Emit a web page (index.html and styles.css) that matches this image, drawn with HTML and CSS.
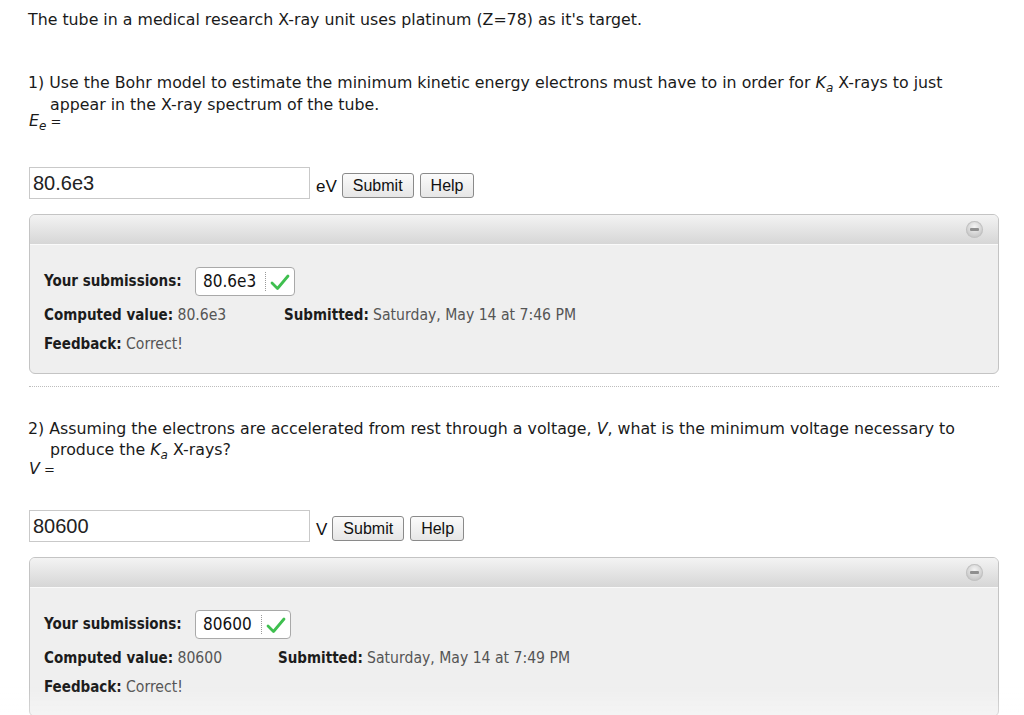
FILE: index.html
```html
<!DOCTYPE html>
<html>
<head>
<meta charset="utf-8">
<link rel="stylesheet" href="styles.css">
</head>
<body>
<div class="page">
  <p class="intro">The tube in a medical research X-ray unit uses platinum (Z=78) as it's target.</p>

  <div class="question q1">
    <p class="qtext">1) Use the Bohr model to estimate the minimum kinetic energy electrons must have to in order for <i>K<sub>a</sub></i> X-rays to just appear in the X-ray spectrum of the tube.</p>
    <div class="var"><i>E<sub>e</sub></i> =</div>
    <div class="answer-row">
      <div class="input">80.6e3</div>
      <span class="unit">eV</span>
      <button class="btn">Submit</button>
      <button class="btn help">Help</button>
    </div>
    <div class="panel">
      <div class="panel-head"><span class="collapse"></span></div>
      <div class="panel-body">
        <div class="row subs">
          <span class="lbl">Your submissions:</span>
          <span class="subbox"><span class="subval">80.6e3</span><span class="sep"></span><svg class="check" viewBox="0 0 20 18" width="20" height="18"><path d="M2 10 L7.5 15.5 L18 3" fill="none" stroke="#3fbf4f" stroke-width="2.8" stroke-linecap="round" stroke-linejoin="round"/></svg></span>
        </div>
        <div class="row">
          <span class="col"><b>Computed value:</b> <span class="v">80.6e3</span></span>
          <span><b>Submitted:</b> <span class="v">Saturday, May 14 at 7:46 PM</span></span>
        </div>
        <div class="row">
          <span><b>Feedback:</b> <span class="v">Correct!</span></span>
        </div>
      </div>
    </div>
  </div>

  <div class="divider"></div>

  <div class="question q2">
    <p class="qtext">2) Assuming the electrons are accelerated from rest through a voltage, <i>V</i>, what is the minimum voltage necessary to produce the <i>K<sub>a</sub></i> X-rays?</p>
    <div class="var"><i>V</i> =</div>
    <div class="answer-row">
      <div class="input">80600</div>
      <span class="unit">V</span>
      <button class="btn">Submit</button>
      <button class="btn help">Help</button>
    </div>
    <div class="panel">
      <div class="panel-head"><span class="collapse"></span></div>
      <div class="panel-body">
        <div class="row subs">
          <span class="lbl">Your submissions:</span>
          <span class="subbox"><span class="subval">80600</span><span class="sep"></span><svg class="check" viewBox="0 0 20 18" width="20" height="18"><path d="M2 10 L7.5 15.5 L18 3" fill="none" stroke="#3fbf4f" stroke-width="2.8" stroke-linecap="round" stroke-linejoin="round"/></svg></span>
        </div>
        <div class="row">
          <span class="col col2"><b>Computed value:</b> <span class="v">80600</span></span>
          <span><b>Submitted:</b> <span class="v">Saturday, May 14 at 7:49 PM</span></span>
        </div>
        <div class="row">
          <span><b>Feedback:</b> <span class="v">Correct!</span></span>
        </div>
      </div>
    </div>
  </div>
</div>
<div class="fade"></div>
</body>
</html>
```

FILE: styles.css
```css
html, body {
  margin: 0;
  padding: 0;
  background: #ffffff;
}
body {
  font-family: "DejaVu Sans", sans-serif;
  color: #1a1a1a;
  font-size: 15.8px;
  overflow: hidden;
  height: 715px;
}
.page {
  padding: 10px 25px 0 29px;
}
p {
  margin: 0;
}
.intro {
  line-height: 20px;
  margin-left: -1px;
}
.question.q1 {
  margin-top: 42px;
}
.qtext {
  line-height: 22px;
  padding-left: 22px;
  text-indent: -22px;
  margin-left: -1px;
  padding-right: 10px;
}
.q2 .qtext {
  line-height: 21px;
}
sub {
  font-size: 12px;
  vertical-align: -4px;
  line-height: 0;
}
.var {
  line-height: 18px;
  margin-top: -4px;
  font-size: 13px;
}
.q2 .var {
  margin-top: 0;
}
.var i {
  font-size: 15.8px;
}
.answer-row {
  display: flex;
  align-items: flex-end;
  margin-top: 36px;
}
.q2 .answer-row {
  margin-top: 31px;
}
.input {
  width: 273px;
  height: 30px;
  border: 1px solid #c9c9c9;
  font-family: "Liberation Sans", Arial, sans-serif;
  font-size: 20px;
  line-height: 30px;
  padding-left: 3px;
  padding-right: 3px;
  color: #222;
}
.unit {
  font-family: "Liberation Sans", Arial, sans-serif;
  font-size: 17px;
  line-height: 25px;
  margin-left: 6px;
  margin-right: 5px;
  color: #111;
}
.btn {
  font-family: "Liberation Sans", Arial, sans-serif;
  font-size: 16px;
  height: 25px;
  padding: 0 10px;
  border: 1px solid #8a8a8a;
  border-radius: 3px;
  background: linear-gradient(#fbfbfb, #e6e6e6);
  color: #111;
  margin-right: 6px;
  margin-bottom: 1px;
}
.btn.help {
  padding: 0 9px 0 10px;
}
.panel {
  margin-top: 15px;
  border: 1px solid #c4c4c4;
  border-radius: 6px;
  overflow: hidden;
  background: #efefef;
}
.panel-head {
  height: 29px;
  background: linear-gradient(#f3f3f3, #d6d6d6);
  border-bottom: 1px solid #fafafa;
  display: flex;
  justify-content: flex-end;
  align-items: center;
  padding-right: 15px;
}
.collapse {
  width: 17px;
  height: 17px;
  border-radius: 50%;
  background: radial-gradient(circle at 50% 35%, #f4f4f4, #c8c8c8 70%, #b0b0b0);
  box-shadow: 0 0 0 1px #c2c2c2 inset;
  position: relative;
}
.collapse::after {
  content: "";
  position: absolute;
  left: 4px;
  right: 4px;
  top: 7px;
  height: 3px;
  border-radius: 1px;
  background: #8f8f8f;
}
.panel-body {
  padding: 21px 15px 14px 14px;
  font-family: "DejaVu Sans Condensed", "DejaVu Sans", sans-serif;
  font-size: 15px;
  color: #555;
}
.panel-body b {
  color: #1c1c1c;
}
.v {
  font-size: 15.6px;
}
.row {
  display: flex;
  align-items: center;
  height: 29px;
  line-height: 29px;
}
.row.subs {
  height: 31px;
}
.row.subs + .row {
  margin-top: 4px;
}
.lbl {
  font-weight: bold;
  color: #1c1c1c;
  width: 151px;
}
.subbox {
  display: inline-flex;
  align-items: center;
  height: 27px;
  border: 1px solid #a9a9a9;
  border-radius: 4px;
  background: #fff;
  padding: 0 4px 0 7px;
}
.subval {
  color: #111;
  font-size: 17px;
  line-height: 27px;
}
.sep {
  width: 0;
  height: 19px;
  border-left: 1px dotted #9a9a9a;
  margin: 0 4px 0 9px;
}
.check {
  display: block;
}
.col {
  width: 240px;
}
.col.col2 {
  width: 234px;
}
.divider {
  margin-top: 12px;
  border-top: 1px dotted #bdbdbd;
}
.question.q2 {
  margin-top: 31px;
}
.fade {
  position: fixed;
  left: 0;
  right: 0;
  bottom: 0;
  height: 28px;
  background: linear-gradient(rgba(255,255,255,0), rgba(255,255,255,0.35));
  pointer-events: none;
}
```
